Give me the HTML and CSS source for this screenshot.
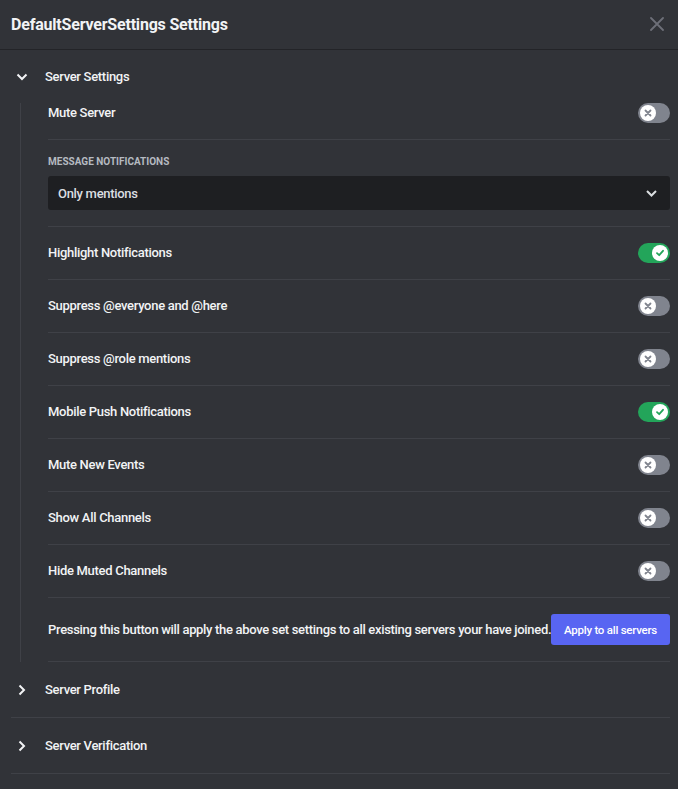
FILE: index.html
```html
<!DOCTYPE html>
<html>
<head>
<meta charset="utf-8">
<link rel="stylesheet" href="styles.css">
</head>
<body>
<div class="modal">
  <header class="header">
    <h1 class="title">DefaultServerSettings Settings</h1>
    <button class="close" aria-label="Close">
      <svg width="14" height="14" viewBox="0 0 14 14"><path d="M1 1L13 13M13 1L1 13" stroke="currentColor" stroke-width="1.8" fill="none" stroke-linecap="round"/></svg>
    </button>
  </header>
  <main class="content">
    <section class="section open">
      <div class="section-head first">
        <span class="chev"><svg width="12" height="8" viewBox="0 0 12 8"><path d="M1.5 1.5L6 6L10.5 1.5" stroke="currentColor" stroke-width="2" fill="none"/></svg></span>
        <span class="section-title">Server Settings</span>
      </div>
      <div class="section-body">
        <div class="row first-row">
          <span class="label">Mute Server</span>
          <span class="toggle"><span class="knob"><svg width="10" height="10" viewBox="0 0 10 10"><path d="M2.5 2.5L7.5 7.5M7.5 2.5L2.5 7.5" stroke="currentColor" stroke-width="1.8" stroke-linecap="round"/></svg></span></span>
        </div>
        <div class="block">
          <div class="caption">Message Notifications</div>
          <div class="select">
            <span>Only mentions</span>
            <svg width="11" height="7" viewBox="0 0 11 7"><path d="M1 1L5.5 5.5L10 1" stroke="currentColor" stroke-width="2" fill="none"/></svg>
          </div>
        </div>
        <div class="row">
          <span class="label">Highlight Notifications</span>
          <span class="toggle on"><span class="knob"><svg width="10" height="10" viewBox="0 0 10 10"><path d="M2 5.2L4.2 7.2L8 2.8" stroke="currentColor" stroke-width="1.8" fill="none" stroke-linecap="round" stroke-linejoin="round"/></svg></span></span>
        </div>
        <div class="row">
          <span class="label">Suppress @everyone and @here</span>
          <span class="toggle"><span class="knob"><svg width="10" height="10" viewBox="0 0 10 10"><path d="M2.5 2.5L7.5 7.5M7.5 2.5L2.5 7.5" stroke="currentColor" stroke-width="1.8" stroke-linecap="round"/></svg></span></span>
        </div>
        <div class="row">
          <span class="label">Suppress @role mentions</span>
          <span class="toggle"><span class="knob"><svg width="10" height="10" viewBox="0 0 10 10"><path d="M2.5 2.5L7.5 7.5M7.5 2.5L2.5 7.5" stroke="currentColor" stroke-width="1.8" stroke-linecap="round"/></svg></span></span>
        </div>
        <div class="row">
          <span class="label">Mobile Push Notifications</span>
          <span class="toggle on"><span class="knob"><svg width="10" height="10" viewBox="0 0 10 10"><path d="M2 5.2L4.2 7.2L8 2.8" stroke="currentColor" stroke-width="1.8" fill="none" stroke-linecap="round" stroke-linejoin="round"/></svg></span></span>
        </div>
        <div class="row">
          <span class="label">Mute New Events</span>
          <span class="toggle"><span class="knob"><svg width="10" height="10" viewBox="0 0 10 10"><path d="M2.5 2.5L7.5 7.5M7.5 2.5L2.5 7.5" stroke="currentColor" stroke-width="1.8" stroke-linecap="round"/></svg></span></span>
        </div>
        <div class="row">
          <span class="label">Show All Channels</span>
          <span class="toggle"><span class="knob"><svg width="10" height="10" viewBox="0 0 10 10"><path d="M2.5 2.5L7.5 7.5M7.5 2.5L2.5 7.5" stroke="currentColor" stroke-width="1.8" stroke-linecap="round"/></svg></span></span>
        </div>
        <div class="row">
          <span class="label">Hide Muted Channels</span>
          <span class="toggle"><span class="knob"><svg width="10" height="10" viewBox="0 0 10 10"><path d="M2.5 2.5L7.5 7.5M7.5 2.5L2.5 7.5" stroke="currentColor" stroke-width="1.8" stroke-linecap="round"/></svg></span></span>
        </div>
        <div class="row apply-row">
          <span class="label">Pressing this button will apply the above set settings to all existing servers your have joined.</span>
          <button class="btn">Apply to all servers</button>
        </div>
      </div>
    </section>
    <section class="section closed">
      <div class="section-head">
        <span class="chev"><svg width="8" height="12" viewBox="0 0 8 12"><path d="M1.5 1.5L6 6L1.5 10.5" stroke="currentColor" stroke-width="2" fill="none"/></svg></span>
        <span class="section-title">Server Profile</span>
      </div>
    </section>
    <section class="section closed">
      <div class="section-head">
        <span class="chev"><svg width="8" height="12" viewBox="0 0 8 12"><path d="M1.5 1.5L6 6L1.5 10.5" stroke="currentColor" stroke-width="2" fill="none"/></svg></span>
        <span class="section-title">Server Verification</span>
      </div>
    </section>
  </main>
</div>
</body>
</html>
```

FILE: styles.css
```css
* { box-sizing: border-box; }
html, body { margin: 0; padding: 0; }
body {
  background: #313338;
  font-family: Roboto, "Noto Sans", sans-serif;
  color: #f2f3f5;
  width: 678px;
  height: 789px;
  overflow: hidden;
}
.header {
  height: 50px;
  display: flex;
  align-items: center;
  justify-content: space-between;
  padding: 0 14px 0 11px;
  border-bottom: 1px solid #232428;
}
.title {
  margin: 0;
  font-size: 16px;
  font-weight: 700;
  color: #f2f3f5;
  letter-spacing: -0.2px;
}
.close {
  background: none;
  border: 0;
  padding: 0;
  color: #6d6f78;
  display: flex;
  margin-top: -2px;
}
.content {
  padding: 0 8px 0 11px;
}
.section-head {
  height: 56px;
  display: flex;
  align-items: center;
  border-bottom: 1px solid #3f4147;
}
.section-head.first {
  height: 53px;
  border-bottom: 0;
}
.chev {
  width: 16px;
  margin-left: 3px;
  margin-right: 15px;
  display: flex;
  justify-content: center;
  align-items: center;
  color: #f2f3f5;
}
.section-title {
  font-size: 13px;
  font-weight: 500;
  color: #f2f3f5;
  letter-spacing: -0.3px;
}
.section-body {
  margin-left: 9px;
  border-left: 1px solid #3f4147;
  padding-left: 27px;
}
.row {
  display: flex;
  align-items: center;
  justify-content: space-between;
  padding: 16px 0;
  min-height: 53px;
  border-bottom: 1px solid #3f4147;
}
.row.first-row {
  padding-top: 0;
  min-height: 37px;
}
.label {
  font-size: 13px;
  font-weight: 500;
  color: #f2f3f5;
  line-height: 20px;
  letter-spacing: -0.3px;
}
.toggle {
  width: 32px;
  height: 20px;
  border-radius: 10px;
  background: #80848e;
  display: flex;
  align-items: center;
  padding: 0 2px;
  flex-shrink: 0;
  color: #80848e;
}
.toggle.on {
  background: #23a55a;
  color: #23a55a;
  justify-content: flex-end;
}
.knob {
  width: 16px;
  height: 16px;
  border-radius: 50%;
  background: #ffffff;
  display: flex;
  align-items: center;
  justify-content: center;
}
.block {
  padding: 16px 0 16px;
  border-bottom: 1px solid #3f4147;
}
.caption {
  font-size: 10px;
  font-weight: 700;
  text-transform: uppercase;
  color: #b5bac1;
  line-height: 12px;
  margin-bottom: 8px;
}
.select {
  height: 34px;
  background: #1e1f22;
  border-radius: 3px;
  display: flex;
  align-items: center;
  justify-content: space-between;
  padding: 0 13px 0 10px;
  font-size: 13px;
  font-weight: 500;
  color: #dbdee1;
  letter-spacing: -0.3px;
}
.select svg { color: #dbdee1; }
.apply-row {
  padding: 16px 0 16px;
  min-height: 63px;
}
.apply-row .label {
  white-space: nowrap;
  flex: 1;
  min-width: 0;
  letter-spacing: -0.32px;
}
.btn {
  height: 31px;
  width: 119px;
  background: #5865f2;
  color: #ffffff;
  border: 0;
  border-radius: 3px;
  font-family: inherit;
  font-size: 11.5px;
  font-weight: 500;
  letter-spacing: -0.25px;
  padding: 0;
  flex-shrink: 0;
  white-space: nowrap;
}
```
